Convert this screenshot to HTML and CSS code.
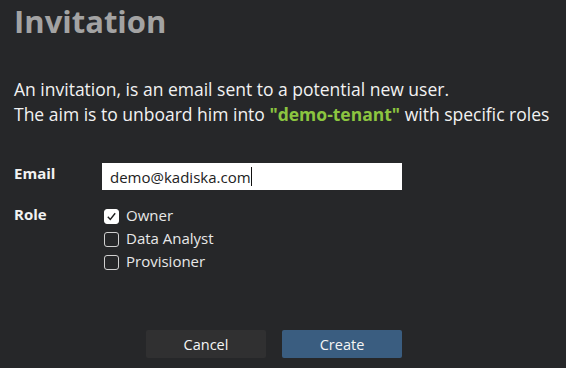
FILE: index.html
```html
<!DOCTYPE html>
<html lang="en">
<head>
    <meta charset="UTF-8">
    <meta name="viewport" content="width=device-width, initial-scale=1.0">
    <title>Invitation</title>
    <link rel="stylesheet" href="styles.css">
</head>
<body>
    <div class="dialog">
        <h1 class="title">Invitation</h1>
        <div class="intro">
            <p>An invitation, is an email sent to a potential new user.</p>
            <p>The aim is to unboard him into <span class="tenant">"demo-tenant"</span> with specific roles</p>
        </div>
        <div class="form">
            <div class="form-row">
                <label class="form-label" for="email">Email</label>
                <div class="input-box">
                    <span class="input-text">demo@kadiska.com</span><span class="caret"></span>
                </div>
            </div>
            <div class="form-row">
                <span class="form-label role-label">Role</span>
                <div class="roles">
                    <label class="role"><span class="check checked">
                        <svg width="11" height="11" viewBox="0 0 11 11"><path d="M1.8 5.8 L4.3 8.4 L9.2 2.2" fill="none" stroke="#1e1e1e" stroke-width="1.4"/></svg>
                    </span>Owner</label>
                    <label class="role"><span class="check"></span>Data Analyst</label>
                    <label class="role"><span class="check"></span>Provisioner</label>
                </div>
            </div>
        </div>
        <div class="button-group">
            <button class="btn btn-cancel">Cancel</button>
            <button class="btn btn-create">Create</button>
        </div>
    </div>
</body>
</html>
```

FILE: styles.css
```css
html, body {
    margin: 0;
    padding: 0;
    background-color: #262729;
}

body {
    font-family: "Open Sans", "Noto Sans", sans-serif;
    color: #f2f2f2;
}

.dialog {
    width: 566px;
    height: 368px;
    padding: 0 14px;
    box-sizing: border-box;
}

.title {
    margin: 0;
    font-size: 31px;
    font-weight: 700;
    line-height: 42px;
    color: #a3a3a3;
}

.intro {
    margin-top: 35px;
    font-size: 17.5px;
}

.intro p {
    margin: 0;
    line-height: 25px;
}

.tenant {
    color: #8cc540;
    font-weight: 700;
}

.form {
    margin-top: 36px;
}

.form-row {
    display: flex;
    align-items: flex-start;
    margin-bottom: 13px;
}

.form-row:last-child {
    margin-bottom: 0;
}

.form-label {
    width: 88px;
    font-size: 15px;
    font-weight: 700;
    line-height: 20px;
}

.role-label {
    line-height: 23px;
}

.input-box {
    width: 300px;
    height: 27px;
    background-color: #fff;
    display: flex;
    align-items: center;
    padding-left: 8px;
    box-sizing: border-box;
}

.input-text {
    color: #222;
    font-size: 15px;
}

.caret {
    width: 1px;
    height: 19px;
    background-color: #111;
}

.roles {
    display: flex;
    flex-direction: column;
    padding-left: 2px;
}

.role {
    display: flex;
    align-items: center;
    height: 23px;
    font-size: 15px;
    color: #e8e8e8;
}

.check {
    width: 15px;
    height: 15px;
    box-sizing: border-box;
    border: 1px solid #d0d0d0;
    border-radius: 3px;
    margin-top: 3px;
    margin-right: 7px;
    display: flex;
    align-items: center;
    justify-content: center;
}

.check.checked {
    background-color: #fff;
    border-color: #fff;
}

.button-group {
    display: flex;
    gap: 16px;
    margin-top: 58px;
    padding-left: 132px;
}

.btn {
    width: 120px;
    height: 28px;
    border: none;
    border-radius: 2px;
    font-family: "Open Sans", "Noto Sans", sans-serif;
    font-size: 14.5px;
    color: #f5f5f5;
    cursor: pointer;
}

.btn-cancel {
    background-color: #303031;
}

.btn-create {
    background-color: #3a5d80;
}
```
